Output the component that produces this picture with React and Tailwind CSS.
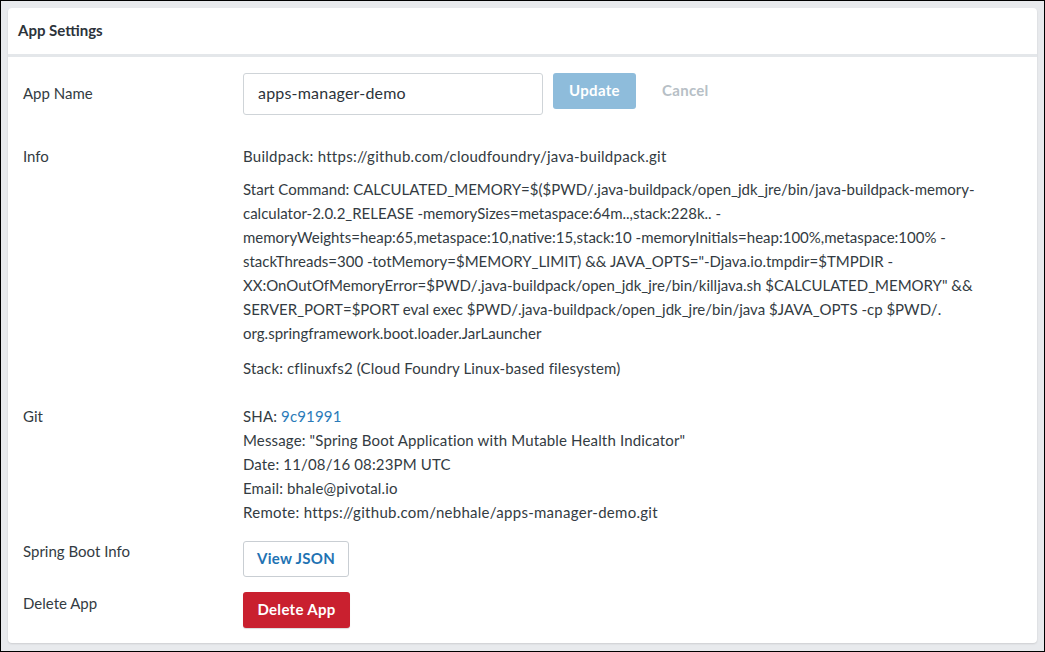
import React from "react";

const startLines = [
  "Start Command: CALCULATED_MEMORY=$($PWD/.java-buildpack/open_jdk_jre/bin/java-buildpack-memory-",
  "calculator-2.0.2_RELEASE -memorySizes=metaspace:64m..,stack:228k.. -",
  "memoryWeights=heap:65,metaspace:10,native:15,stack:10 -memoryInitials=heap:100%,metaspace:100% -",
  'stackThreads=300 -totMemory=$MEMORY_LIMIT) && JAVA_OPTS="-Djava.io.tmpdir=$TMPDIR -',
  'XX:OnOutOfMemoryError=$PWD/.java-buildpack/open_jdk_jre/bin/killjava.sh $CALCULATED_MEMORY" &&',
  "SERVER_PORT=$PORT eval exec $PWD/.java-buildpack/open_jdk_jre/bin/java $JAVA_OPTS -cp $PWD/.",
  "org.springframework.boot.loader.JarLauncher",
];

export default function App() {
  return (
    <div
      className="w-[1045px] h-[652px] border border-black bg-[#e8eaed] p-[7px] text-[#333b42] text-[15px] leading-[24px]"
      style={{ fontFamily: "Lato, 'Noto Sans', sans-serif" }}
    >
      <div className="h-[635px] bg-white rounded-[4px] shadow-[0_1px_2px_rgba(0,0,0,0.12)]">
        <div className="h-[49px] px-[10px] pt-[10px] border-b-[3px] border-[#e4e7ea] font-bold text-[15px] text-[#2c333a]">
          App Settings
        </div>
        <div className="px-[15px] grid grid-cols-[220px_1fr]">
          {/* App Name */}
          <div className="mt-[16px] pt-[8px]">App Name</div>
          <div className="mt-[16px] flex items-start">
            <div className="w-[300px] h-[42px] border border-[#cfd4d8] rounded-[3px] px-[14px] pb-[3px] flex items-center text-[16px] text-[#2c333a] tracking-[0.2px]">
              apps-manager-demo
            </div>
            <button className="ml-[10px] w-[83px] h-[36px] pb-[3px] rounded-[3px] bg-[#8ebcdb] text-white font-bold text-[15px] tracking-[0.3px]">
              Update
            </button>
            <button className="ml-[14px] h-[36px] pb-[3px] px-[12px] text-[#b7bfc6] font-bold text-[15px] tracking-[0.3px]">
              Cancel
            </button>
          </div>

          {/* Info */}
          <div className="mt-[29px]">Info</div>
          <div className="mt-[29px]">
            <div className="whitespace-nowrap tracking-[0.27px]">Buildpack: https://github.com/cloudfoundry/java-buildpack.git</div>
            <div className="mt-[9px]">
              {startLines.map((l, i) => (
                <div key={i} className="whitespace-nowrap">{l}</div>
              ))}
            </div>
            <div className="mt-[11px] whitespace-nowrap tracking-[0.15px]">Stack: cflinuxfs2 (Cloud Foundry Linux-based filesystem)</div>
          </div>

          {/* Git */}
          <div className="mt-[24px]">Git</div>
          <div className="mt-[24px] tracking-[0.15px]">
            <div>
              SHA: <span className="text-[#2b7bb9]">9c91991</span>
            </div>
            <div>Message: "Spring Boot Application with Mutable Health Indicator"</div>
            <div>Date: 11/08/16 08:23PM UTC</div>
            <div>Email: bhale@pivotal.io</div>
            <div className="tracking-[0.28px]">Remote: https://github.com/nebhale/apps-manager-demo.git</div>
          </div>

          {/* Spring Boot Info */}
          <div className="mt-[15px]">Spring Boot Info</div>
          <div className="mt-[15px]">
            <button className="mt-[2px] w-[106px] h-[36px] pb-[2px] rounded-[3px] border border-[#c9ced3] bg-white text-[#1f73b3] font-bold text-[15px] tracking-[0.3px]">
              View JSON
            </button>
          </div>

          {/* Delete App */}
          <div className="mt-[14px]">Delete App</div>
          <div className="mt-[14px]">
            <button className="mt-[1px] w-[107px] h-[36px] pb-[2px] rounded-[3px] bg-[#c9202f] text-white font-bold text-[15px] tracking-[0.3px] shadow-[0_1px_1px_rgba(0,0,0,0.15)]">
              Delete App
            </button>
          </div>
        </div>
      </div>
    </div>
  );
}
